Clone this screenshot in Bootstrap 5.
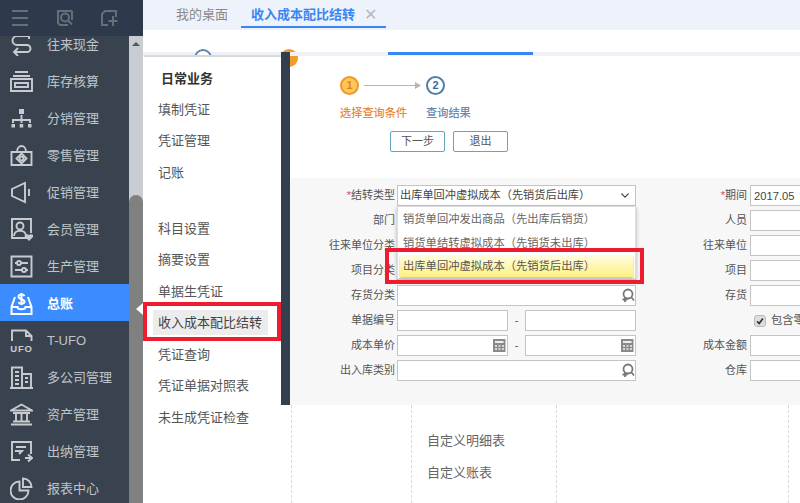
<!doctype html>
<html lang="zh">
<head>
<meta charset="utf-8">
<title>收入成本配比结转</title>
<link href="https://cdn.jsdelivr.net/npm/bootstrap@5.3.0/dist/css/bootstrap.min.css" rel="stylesheet">
<style>
html,body{height:100%;overflow:hidden}
body{font-family:"Liberation Sans","Noto Sans CJK SC",sans-serif;font-size:11px;color:#555;background:#fff}
.app-root{height:503px;width:800px;overflow:hidden}
.side{width:143px;flex:none;position:relative;background:#39434f}
.side-head{height:36px;background:#2e394b;position:relative;z-index:2;padding-left:9px}
.side-head svg{stroke:#666e78;fill:none;stroke-width:2}
.side-body{height:467px}
.side-list{width:129px;margin:-11px 0 0;padding:0;list-style:none}
.side-item{height:37px;padding-left:10px;font-size:13px;color:#bfc4ca;gap:14px}
.side-item span{padding-top:2px}
.side-item svg{width:23px;height:23px;flex:none;fill:none;stroke:#c8ccd0;stroke-width:1.9;margin-top:1px}
.side-item.is-on{background:#3a8cff;color:#fff;font-weight:700}
.side-item.is-on svg{stroke:#fff}
.scroll-track{width:14px;background:#c9ccd1;position:relative}
.scroll-up{height:0;width:0;margin:6px auto 0;border:4px solid transparent;border-bottom:4px solid #555;border-top:0}
.scroll-thumb{height:308px;background:#808080;border-radius:7px 7px 0 0}
.side-tip{position:absolute;right:0;top:303px;width:0;height:0;border:6px solid transparent;border-right:7px solid #fff;border-left:0}
.tabs-bar{height:30px;background:#eef2fa;padding-left:33px;font-size:13px;color:#8a8a8a}
.tab-plain{line-height:30px;width:65px}
.tab-live{width:145px;height:28px;line-height:30px;padding-left:10px;border-bottom:2px solid #3a86f5;color:#3a86f5;font-weight:700;gap:9px}
.tab-x{font-weight:400;color:#b5b8bd;font-size:16px}
.stage{position:relative;overflow:hidden;min-height:0}
.top-strip{height:4px;margin-top:22px;background:#eef2f8;position:relative;z-index:1}
.top-strip-seg{position:absolute;left:245px;width:145px;top:0;height:3px;background:#3a86f5}
.ring{position:absolute;top:19px;width:18px;height:18px;border-radius:50%}
.ring-a{left:51px;border:2px solid #5f87ad;background:#fff;z-index:2}
.ring-b{left:137px;background:#f39a2b}
.steps{height:122px;margin-left:147px;padding:20px 0 0 50px}
.step-no{width:19px;height:19px;border-radius:50%;font-weight:700;font-size:11px;line-height:1}
.step-one{background:#ffc65a;border:2px solid #f3962a;color:#e5811d}
.step-two{background:#fff;border:2px solid #4f7ea8;color:#2f6fa5}
.step-line{margin:0 5px;display:block}
.step-names{margin-top:11px;height:14px;line-height:14px;font-size:11.2px;font-weight:500}
.name-one{width:86px;color:#e8893f}
.name-two{color:#6a8ab0}
.step-btns{margin:11px 0 0 50px;gap:8px}
.step-btn{width:55px;height:21px;padding:0;font-size:11px;line-height:17px;border:1px solid #62a6c4;border-radius:2px;color:#555;background:#fff}
.form-panel{height:227px;margin-left:147px;background:#f7f7f7;padding-top:7px;width:510px}
.form-col{display:grid;grid-auto-rows:21px;row-gap:4px;flex:none;align-items:center}
.form-left{width:346px;grid-template-columns:105px 239px;column-gap:2px}
.form-right{width:314px;grid-template-columns:111px 200px;column-gap:3px}
.lab{text-align:right;white-space:nowrap;color:#555;font-size:11px}
.req{color:#e2455b}
.fld{height:21px;border-radius:0;border:1px solid #c4c4c4;padding:0 3px;font-size:11.2px;color:#444;background-color:#fff;min-height:0;line-height:19px;box-shadow:none}
select.fld{padding:0 18px 0 2px;background-position:right 4px center;background-size:12px 9px}
.fld-wrap{position:relative;height:21px}
.fld-wrap svg{position:absolute;right:1px;top:3px;width:15px;height:15px}
.pair{display:grid;grid-template-columns:111px 17px 111px;align-items:center;text-align:center;height:21px}
.check-row{gap:5px;padding-left:4px;white-space:nowrap;font-size:11.3px;margin:0;color:#555}
.check-box{width:12px;height:12px;margin:0;flex:none;background-color:#ddd;border:1px solid #bbb;float:none;border-radius:2px}
.check-box:checked{background-color:#ddd;border-color:#bbb;background-image:url("data:image/svg+xml,%3csvg xmlns='http://www.w3.org/2000/svg' viewBox='0 0 12 12'%3e%3cpath fill='none' stroke='%23333' stroke-width='2' d='M2.5 6.5l2.5 2.5 4.5-6'/%3e%3c/svg%3e")}
.drop{position:absolute;left:0;top:21px;width:100%;height:73px;background:#fff;border:1px solid #ddd;box-shadow:0 2px 4px rgba(0,0,0,.3);z-index:3;padding:1px 2px 0;font-size:11.3px;color:#666;white-space:nowrap}
.drop-item{height:24px;line-height:22px;padding-left:3px}
.drop-hit{height:21px;margin-top:0;line-height:21px;background:linear-gradient(#fffde0,#fdf080);color:#555;box-shadow:0 1px 2px rgba(0,0,0,.3)}
.low{margin-left:147px;font-size:13px;color:#666;min-height:0}
.low-col{border-left:1px dashed #d9d9d9;flex:none}
.low-a{width:120px;margin-left:1px}
.low-b{width:145px;padding:26px 0 0 15px}
.low-c{width:232px}
.low-d{width:20px}
.low-line{height:32px;line-height:20px}
.flyout{position:absolute;left:1px;top:25px;bottom:0;width:137px;background:#fff;border-top:2px solid #d9d9d9;z-index:4;font-size:13px;color:#555;padding-top:13px}
.fly-title{font-weight:700;color:#333;padding-left:17px;height:23.5px;line-height:18px}
.fly-item{height:31.5px;line-height:31.5px;padding-left:14px;margin-top:0}
.fly-gap{height:24.5px}
.fly-on{background:#ececec;color:#444;margin-left:9px;padding-left:5px;width:115px;height:25px;line-height:25px;margin-top:3px;margin-bottom:3.5px}
.fly-edge{position:absolute;left:138px;top:22px;width:9px;height:353px;background:#333f4e;z-index:5}
.mark-box{position:absolute;border:4px solid #ed1c2e;z-index:6;pointer-events:none}
.mark-a{left:0;top:272px;width:138px;height:39px}
.mark-b{left:242px;top:218px;width:259px;height:36px}
</style>
</head>
<body>
<div class="app-root d-flex">
  <aside class="side d-flex flex-column">
    <div class="side-head d-flex align-items-center">
      <svg width="22" height="22" viewBox="0 0 22 22"><path d="M3 4h16M3 11h16M3 18h16"/></svg>
      <svg width="20" height="20" viewBox="0 0 20 20" class="ms-4"><path d="M17 3H3v12l2 2h8M17 3v9"/><circle cx="10" cy="9.500" r="4"/><path d="M13 12.500l4 4"/></svg>
      <svg width="20" height="20" viewBox="0 0 20 20" class="ms-4 ps-0"><path d="M17 9V3H6L3 6v11h6"/><path d="M14 8v10M9.500 13h9"/></svg>
    </div>
    <div class="side-body d-flex">
      <ul class="side-list">
        <li class="side-item d-flex align-items-center"><svg viewBox="0 0 23 23"><path d="M19 6V3H7a4.500 4.500 0 0 0 0 9h10a3.500 3.500 0 0 1 0 7H4M8 15l-4 4 4 4"/></svg><span>往来现金</span></li>
        <li class="side-item d-flex align-items-center"><svg viewBox="0 0 23 23"><path d="M5 2h13M3 6h17M1 9h21v12H1zM5 13h13v4H5z"/></svg><span>库存核算</span></li>
        <li class="side-item d-flex align-items-center"><svg viewBox="0 0 23 23"><path d="M11.500 8v8M3 16v-3h17v3" /><path fill="#c8ccd0" d="M9 2h5v5H9zM1.500 17h3.500v3.500H1.500zM9.700 17h3.500v3.500H9.700zM18 17h3.500v3.500H18z" stroke="none"/></svg><span>分销管理</span></li>
        <li class="side-item d-flex align-items-center"><svg viewBox="0 0 23 23"><path d="M1.500 8h20v13h-20zM7 8c0-8 9-8 9 0"/><path d="M11.500 9.500l5 5-5 5-5-5z"/><circle cx="11.500" cy="14.500" r="2"/></svg><span>零售管理</span></li>
        <li class="side-item d-flex align-items-center"><svg viewBox="0 0 23 23"><path d="M2 8l13-6v19L2 15zM19 8v7"/></svg><span>促销管理</span></li>
        <li class="side-item d-flex align-items-center"><svg viewBox="0 0 23 23"><path d="M18 20H2V1h19v14"/><circle cx="10" cy="8" r="3.500"/><path d="M4 18c0-7 12-7 12 0"/><path fill="#c8ccd0" stroke="none" d="M19 23l-4-4c-1.500-2 2-4 4-2 2-2 5.500 0 4 2z"/></svg><span>会员管理</span></li>
        <li class="side-item d-flex align-items-center"><svg viewBox="0 0 23 23"><path d="M1.500 1.500h20v20h-20zM5 8h13M5 15h13"/><circle cx="9" cy="8" r="2" fill="#39434f"/><circle cx="14" cy="15" r="2" fill="#39434f"/></svg><span>生产管理</span></li>
        <li class="side-item is-on d-flex align-items-center"><svg viewBox="0 0 23 23"><path stroke-width="2" d="M5 5L1.500 15v7h20v-7L18 5M1.500 15h6c0 3 8 3 8 0h6"/><path stroke-width="2" d="M14.500 4c-1-2-6-2-6 .8s6 2 6 4.700-5 2.800-6 .8M11.500 1v12"/></svg><span>总账</span></li>
        <li class="side-item d-flex align-items-center"><svg viewBox="0 0 23 23"><path d="M2 12V1.500h14L21.500 7v5M16 1.500V7h5.500"/><text x="11.500" y="22.500" text-anchor="middle" font-size="9.500" font-weight="700" letter-spacing=".8" fill="#c8ccd0" stroke="none" font-family="Liberation Sans">UFO</text></svg><span>T-UFO</span></li>
        <li class="side-item d-flex align-items-center"><svg viewBox="0 0 23 23"><path d="M0 22h23M2 22V1.500h10V22M12 8h9v14M5 6h4M5 10h4M5 14h4M5 18h4M15 12h3M15 16h3"/></svg><span>多公司管理</span></li>
        <li class="side-item d-flex align-items-center"><svg viewBox="0 0 23 23"><path d="M11.500 1.500L1 7.500h21zM3 10h17M6 11v7M11.500 11v7M17 11v7M3 18.500h17M1 21.500h21"/></svg><span>资产管理</span></li>
        <li class="side-item d-flex align-items-center"><svg viewBox="0 0 23 23"><path d="M10 20H2V2h19v12M6 7h10M6 11h6l-3 3M6 11l-1 0M15 18h6M18 14.500l4 3.500-4 3.500"/></svg><span>出纳管理</span></li>
        <li class="side-item d-flex align-items-center"><svg viewBox="0 0 23 23"><path d="M9.500 4.500a9 9 0 1 0 9 9h-9zM13 1.500a8.500 8.500 0 0 1 8.500 8.500H13z"/></svg><span>报表中心</span></li>
      </ul>
      <div class="scroll-track d-flex flex-column justify-content-between"><div class="scroll-up"></div><div class="scroll-thumb"></div></div>
    </div>
    <div class="side-tip"></div>
  </aside>

  <main class="flex-fill d-flex flex-column overflow-hidden">
    <div class="tabs-bar d-flex flex-none">
      <div class="tab-plain">我的桌面</div>
      <div class="tab-live d-flex"><span>收入成本配比结转</span><span class="tab-x">✕</span></div>
    </div>
    <div class="stage flex-fill d-flex flex-column">
      <div class="ring ring-b"></div>
      <div class="top-strip"><div class="top-strip-seg"></div></div>
      <div class="ring ring-a"></div>

      <section class="steps">
        <div class="d-flex align-items-center">
          <div class="step-no step-one d-flex align-items-center justify-content-center">1</div>
          <svg class="step-line" width="57" height="9" viewBox="0 0 57 9"><path d="M0 4.500h52" stroke="#b9b4ac" fill="none"/><path d="M51 1l6 3.500-6 3.500z" fill="#b9b4ac"/></svg>
          <div class="step-no step-two d-flex align-items-center justify-content-center">2</div>
        </div>
        <div class="step-names d-flex"><div class="name-one">选择查询条件</div><div class="name-two">查询结果</div></div>
        <div class="step-btns d-flex"><button type="button" class="btn step-btn">下一步</button><button type="button" class="btn step-btn">退出</button></div>
      </section>

      <section class="form-panel d-flex">
        <div class="form-col form-left">
          <div class="lab"><span class="req">*</span>结转类型</div>
          <div class="fld-wrap">
            <select class="form-select fld"><option>出库单回冲虚拟成本（先销货后出库）</option></select>
            <div class="drop">
              <div class="drop-item">销货单回冲发出商品（先出库后销货）</div>
              <div class="drop-item">销货单结转虚拟成本（先销货未出库）</div>
              <div class="drop-item drop-hit">出库单回冲虚拟成本（先销货后出库）</div>
            </div>
          </div>
          <div class="lab">部门</div><div class="fld-wrap"><input class="form-control fld"></div>
          <div class="lab">往来单位分类</div><div class="fld-wrap"><input class="form-control fld"></div>
          <div class="lab">项目分类</div><div class="fld-wrap"><input class="form-control fld"></div>
          <div class="lab">存货分类</div>
          <div class="fld-wrap"><input class="form-control fld"><svg viewBox="0 0 15 15"><circle cx="8" cy="6" r="4.500" fill="none" stroke="#777" stroke-width="1.800"/><path d="M11.500 9.500l2.500 3M5 9v5M2.500 11.500h5" stroke="#777" stroke-width="1.800" fill="none"/></svg></div>
          <div class="lab">单据编号</div>
          <div class="pair"><input class="form-control fld"><span>-</span><input class="form-control fld"></div>
          <div class="lab">成本单价</div>
          <div class="pair">
            <div class="fld-wrap"><input class="form-control fld"><svg viewBox="0 0 15 15"><rect x="1" y="1" width="12.500" height="13" fill="#8a8a8a"/><path d="M3 4h8.500" stroke="#eee" stroke-width="2"/><path d="M3 8h2M6.500 8h2M10 8h2M3 11h2M6.500 11h2M10 11h2" stroke="#eee" stroke-width="1.500"/></svg></div>
            <span>-</span>
            <div class="fld-wrap"><input class="form-control fld"><svg viewBox="0 0 15 15"><rect x="1" y="1" width="12.500" height="13" fill="#8a8a8a"/><path d="M3 4h8.500" stroke="#eee" stroke-width="2"/><path d="M3 8h2M6.500 8h2M10 8h2M3 11h2M6.500 11h2M10 11h2" stroke="#eee" stroke-width="1.500"/></svg></div>
          </div>
          <div class="lab">出入库类别</div>
          <div class="fld-wrap"><input class="form-control fld"><svg viewBox="0 0 15 15"><circle cx="8" cy="6" r="4.500" fill="none" stroke="#777" stroke-width="1.800"/><path d="M11.500 9.500l2.500 3M5 9v5M2.500 11.500h5" stroke="#777" stroke-width="1.800" fill="none"/></svg></div>
        </div>
        <div class="form-col form-right">
          <div class="lab"><span class="req">*</span>期间</div><div class="fld-wrap"><input class="form-control fld" value="2017.05"></div>
          <div class="lab">人员</div><div class="fld-wrap"><input class="form-control fld"></div>
          <div class="lab">往来单位</div><div class="fld-wrap"><input class="form-control fld"></div>
          <div class="lab">项目</div><div class="fld-wrap"><input class="form-control fld"></div>
          <div class="lab">存货</div><div class="fld-wrap"><input class="form-control fld"></div>
          <div></div>
          <label class="check-row d-flex align-items-center"><input class="form-check-input check-box" type="checkbox" checked><span>包含零售</span></label>
          <div class="lab">成本金额</div><div class="fld-wrap"><input class="form-control fld"></div>
          <div class="lab">仓库</div><div class="fld-wrap"><input class="form-control fld"></div>
        </div>
      </section>

      <section class="low flex-fill d-flex">
        <div class="low-col low-a"></div>
        <div class="low-col low-b"><div class="low-line">自定义明细表</div><div class="low-line">自定义账表</div></div>
        <div class="low-col low-c"></div>
        <div class="low-col low-d"></div>
      </section>

      <nav class="flyout">
        <div class="fly-title">日常业务</div>
        <div class="fly-item">填制凭证</div>
        <div class="fly-item">凭证管理</div>
        <div class="fly-item">记账</div>
        <div class="fly-gap"></div>
        <div class="fly-item">科目设置</div>
        <div class="fly-item">摘要设置</div>
        <div class="fly-item">单据生凭证</div>
        <div class="fly-item fly-on">收入成本配比结转</div>
        <div class="fly-item">凭证查询</div>
        <div class="fly-item">凭证单据对照表</div>
        <div class="fly-item">未生成凭证检查</div>
      </nav>
      <div class="fly-edge"></div>
      <div class="mark-box mark-a"></div>
      <div class="mark-box mark-b"></div>
    </div>
  </main>
</div>
<script src="https://cdn.jsdelivr.net/npm/bootstrap@5.3.0/dist/js/bootstrap.bundle.min.js"></script>
</body>
</html>
